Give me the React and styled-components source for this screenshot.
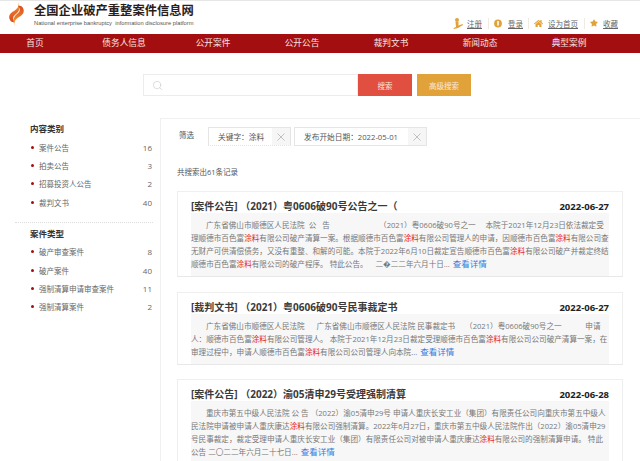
import React from "react";
import styled, { createGlobalStyle } from "styled-components";
import { FaHome, FaStar } from "react-icons/fa";
import { Search } from "lucide-react";

const GlobalStyle = createGlobalStyle`
  html, body {
    margin: 0;
    padding: 0;
    background: #fff;
    overflow: hidden;
  }
  body {
    font-family: "Open Sans", "Noto Sans CJK SC", sans-serif;
    color: #555;
  }
`;

const Page = styled.div`
  width: 640px;
  height: 461px;
  overflow: hidden;
  border-top: 1px solid #e6e6e6;
  box-sizing: border-box;
`;

const Header = styled.header`
  display: flex;
  justify-content: space-between;
  height: 33px;
  padding: 0 16px 0 8px;
`;

const Brand = styled.div`
  display: flex;
  gap: 9px;
`;

const BrandText = styled.div`
  display: flex;
  flex-direction: column;
  padding-top: 2px;
`;

const BrandTitle = styled.div`
  font-size: 12.3px;
  line-height: 16px;
  font-weight: 700;
  color: #2c1d1d;
  white-space: nowrap;
`;

const BrandSub = styled.div`
  font-family: "Liberation Sans", sans-serif;
  font-size: 5.75px;
  line-height: 8px;
  color: #555;
  white-space: pre;
`;

const TopLinks = styled.div`
  display: flex;
  align-items: center;
  height: 12px;
  margin-top: 16px;
`;

const TopLink = styled.a`
  display: flex;
  align-items: center;
  gap: ${(p) => p.$gap}px;
  padding: 0 ${(p) => p.$right}px 0 5px;
  height: 11px;
  font-size: 7.5px;
  color: #666;
  text-decoration: underline;
  border-left: ${(p) => (p.$first ? "none" : "1px solid #f0ebe0")};
  svg {
    color: #e2a23a;
    flex: none;
  }
`;

const Nav = styled.nav`
  display: grid;
  grid-template-columns: 79.5px repeat(6, 89px);
  height: 19px;
  background: #a30f10;
`;

const NavItem = styled.a`
  font-size: 8.7px;
  line-height: 19px;
  text-align: center;
  color: #f5e3e3;
  white-space: nowrap;
  margin-left: ${(p) => (p.$first ? "-9.5px" : "0")};
`;

const SearchRow = styled.div`
  display: flex;
  height: 22px;
  margin: 21px 0 0 143px;
`;

const SearchBox = styled.div`
  display: flex;
  align-items: center;
  width: 215px;
  box-sizing: border-box;
  padding-left: 8px;
  border: 1px solid #ececec;
  color: #c8c8c8;
`;

const SearchButton = styled.button`
  width: 54px;
  height: 22px;
  margin-right: 5px;
  padding: 0;
  border: none;
  font-family: inherit;
  font-size: 7.5px;
  color: #fbe9d8;
  background: ${(p) => p.$bg};
`;

const Content = styled.div`
  display: flex;
  gap: 7px;
  margin-top: 22px;
  padding-left: 15px;
`;

const Sidebar = styled.aside`
  width: 138px;
  flex: none;
`;

const SideGroup = styled.section`
  padding-top: 5px;
  padding-bottom: 10px;
  & + & {
    border-top: 1px dotted #ddd;
  }
`;

const SideTitle = styled.h3`
  margin: 0 0 3px 15px;
  font-size: 8.5px;
  line-height: 12px;
  font-weight: 700;
  color: #333;
`;

const SideRow = styled.div`
  display: flex;
  align-items: center;
  height: 18.4px;
  padding-left: 16px;
  font-size: 7.5px;
  color: #666;
  &::before {
    content: "";
    width: 3px;
    height: 3px;
    margin-right: 5px;
    border-radius: 50%;
    background: #a30f10;
  }
`;

const SideLabel = styled.span`
  flex: 1;
`;

const SideCount = styled.span`
  color: #666;
  font-size: 8px;
  margin-right: 1px;
`;

const Main = styled.main`
  flex: 1;
  border-top: 1px solid #f0f0f0;
  border-left: 1px solid #f0f0f0;
  padding: 8px 17px 0 16px;
`;

const FilterRow = styled.div`
  display: flex;
  align-items: flex-start;
`;

const FilterLabel = styled.span`
  width: 31px;
  padding-left: 2px;
  box-sizing: border-box;
  font-size: 7.5px;
  line-height: 16px;
`;

const Tag = styled.div`
  display: flex;
  width: ${(p) => p.$width}px;
  height: 19px;
  margin-right: 3px;
  box-sizing: border-box;
  border: 1px solid #e5e5e5;
  border-bottom-style: ${(p) => (p.$dotted ? "dotted" : "solid")};
`;

const TagText = styled.span`
  flex: 1;
  padding-left: 9px;
  font-size: 7.7px;
  line-height: 18px;
  white-space: nowrap;
  color: #555;
`;

const TagClose = styled.span`
  display: flex;
  align-items: center;
  justify-content: center;
  width: 18px;
  background: #f6f6f6;
  svg {
    display: block;
  }
`;

const Total = styled.div`
  margin: 19px 0 0;
  font-size: 7.5px;
  line-height: 14px;
  color: #555;
`;

const Card = styled.article`
  margin-top: ${(p) => p.$top}px;
  padding: 7px 13px 0;
  background: #fff;
  border: 1px solid #efefef;
  border-bottom: 1px solid #e8e8e8;
`;

const CardHead = styled.div`
  display: flex;
  justify-content: space-between;
  align-items: center;
  height: 14px;
`;

const CardTitle = styled.h2`
  margin: 0;
  font-size: 10px;
  line-height: 14px;
  font-weight: 700;
  color: #3a3a3a;
  white-space: nowrap;
`;

const CardDate = styled.span`
  font-size: 9.5px;
  font-weight: 700;
  color: #222;
`;

const CardBody = styled.div`
  padding: 5.5px 0 5px;
  background: #f7f7f7;
  font-size: 7.6px;
  line-height: 13.2px;
  color: #777;
`;

const BodyLine = styled.div`
  height: 13.2px;
  white-space: pre;
  text-indent: ${(p) => (p.$indent ? "15px" : "0")};
`;

const Hit = styled.span`
  color: #e2231a;
`;

const More = styled.a`
  margin-left: 3px;
  font-size: 8.5px;
  line-height: 1;
  color: #2f7ee0;
`;

// text with the keyword picked out
const withHits = (text) =>
  text.split("涂料").map((part, i) => (
    <React.Fragment key={i}>
      {i > 0 && <Hit>涂料</Hit>}
      {part}
    </React.Fragment>
  ));

const sideGroups = [
  {
    title: "内容类别",
    rows: [
      ["案件公告", 16],
      ["拍卖公告", 3],
      ["招募投资人公告", 2],
      ["裁判文书", 40],
    ],
  },
  {
    title: "案件类型",
    rows: [
      ["破产审查案件", 8],
      ["破产案件", 40],
      ["强制清算申请审查案件", 11],
      ["强制清算案件", 2],
    ],
  },
];

const cards = [
  {
    top: 12,
    title: "[案件公告] （2021）粤0606破90号公告之一（",
    date: "2022-06-27",
    lines: [
      "广东省佛山市顺德区人民法院  公   告                         （2021）粤0606破90号之一     本院于2021年12月23日依法裁定受",
      "理顺德市百色富涂料有限公司破产清算一案。根据顺德市百色富涂料有限公司管理人的申请，因顺德市百色富涂料有限公司查",
      "无财产可供清偿债务，又没有重整、和解的可能。本院于2022年6月10日裁定宣告顺德市百色富涂料有限公司破产并裁定终结",
      "顺德市百色富涂料有限公司的破产程序。 特此公告。    二�二二年六月十日...",
    ],
  },
  {
    top: 15,
    title: "[裁判文书] （2021）粤0606破90号民事裁定书",
    date: "2022-06-27",
    lines: [
      "广东省佛山市顺德区人民法院      广东省佛山市顺德区人民法院 民事裁定书     （2021）粤0606破90号之一            申请",
      "人：顺德市百色富涂料有限公司管理人。 本院于2021年12月23日裁定受理顺德市百色富涂料有限公司公司破产清算一案，在",
      "审理过程中，申请人顺德市百色富涂料有限公司公司管理人向本院...",
    ],
  },
  {
    top: 14,
    title: "[案件公告] （2022）渝05清申29号受理强制清算",
    date: "2022-06-28",
    lines: [
      "重庆市第五中级人民法院 公 告 （2022）渝05清申29号 申请人重庆长安工业（集团）有限责任公司向重庆市第五中级人",
      "民法院申请被申请人重庆康达涂料有限公司强制清算。2022年6月27日，重庆市第五中级人民法院作出（2022）渝05清申29",
      "号民事裁定，裁定受理申请人重庆长安工业（集团）有限责任公司对被申请人重庆康达涂料有限公司的强制清算申请。 特此",
      "公告 二〇二二年六月二十七日...",
    ],
  },
];

const navItems = ["首页", "债务人信息", "公开案件", "公开公告", "裁判文书", "新闻动态", "典型案例"];

const Logo = () => (
  <svg width="17" height="26" viewBox="0 0 17 26">
    <defs>
      <linearGradient id="flameTop" x1="0" y1="0" x2="0" y2="1">
        <stop offset="0" stopColor="#f0b43c" />
        <stop offset="0.45" stopColor="#e8702a" />
        <stop offset="1" stopColor="#dc4a22" />
      </linearGradient>
      <linearGradient id="flameBottom" x1="0" y1="1" x2="0" y2="0">
        <stop offset="0" stopColor="#f2c044" />
        <stop offset="0.4" stopColor="#e9802c" />
        <stop offset="1" stopColor="#dc4a22" />
      </linearGradient>
    </defs>
    <path d="M10 1C12 5 9 8 6 10 2 12 0 15 2 19c1 2 3 2.500 5 2C4 18 5 15 8 13c3-2 5-7 2-12z" fill="url(#flameTop)" />
    <path d="M7 25C5 21 8 18 11 16c4-2 6-5 4-9-1-2-3-2.500-5-2 3 3 2 6-1 8-3 2-5 7-2 12z" fill="url(#flameBottom)" />
  </svg>
);

const UserIcon = () => (
  <svg width="10" height="11" viewBox="0 0 10 11" fill="#e2a23a">
    <circle cx="4" cy="2" r="2" />
    <path d="M2.500 4h3v3.500L9.500 6l.5 1-5 3-4 1-.5-1 2.500-1z" />
  </svg>
);

const KeyIcon = () => (
  <svg width="8" height="9" viewBox="0 0 8 9">
    <circle cx="4" cy="4.500" r="3.900" fill="#e2a23a" />
    <rect x="3.200" y="2" width="1.600" height="4.500" fill="#fff" />
  </svg>
);

const CloseIcon = () => (
  <svg width="8" height="8" viewBox="0 0 8 8" stroke="#aaa" strokeWidth="0.7">
    <path d="M.5.500l7 7M7.500.500l-7 7" />
  </svg>
);

export default function App() {
  return (
    <Page>
      <GlobalStyle />
      <Header>
        <Brand>
          <Logo />
          <BrandText>
            <BrandTitle>全国企业破产重整案件信息网</BrandTitle>
            <BrandSub>National enterprise bankruptcy  information disclosure platform</BrandSub>
          </BrandText>
        </Brand>
        <TopLinks>
          <TopLink $first $gap={4} $right={6}><UserIcon />注册</TopLink>
          <TopLink $gap={6} $right={5}><KeyIcon />登录</TopLink>
          <TopLink $gap={5} $right={6}><FaHome size={9} />设为首页</TopLink>
          <TopLink $gap={5} $right={6}><FaStar size={8} />收藏</TopLink>
        </TopLinks>
      </Header>
      <Nav>
        {navItems.map((item, i) => (
          <NavItem key={item} $first={i === 0}>{item}</NavItem>
        ))}
      </Nav>
      <SearchRow>
        <SearchBox><Search size={11} strokeWidth={1.3} /></SearchBox>
        <SearchButton $bg="#e04f3f">搜索</SearchButton>
        <SearchButton $bg="#e2a23a">高级搜索</SearchButton>
      </SearchRow>
      <Content>
        <Sidebar>
          {sideGroups.map((group) => (
            <SideGroup key={group.title}>
              <SideTitle>{group.title}</SideTitle>
              {group.rows.map(([label, count]) => (
                <SideRow key={label}>
                  <SideLabel>{label}</SideLabel>
                  <SideCount>{count}</SideCount>
                </SideRow>
              ))}
            </SideGroup>
          ))}
        </Sidebar>
        <Main>
          <FilterRow>
            <FilterLabel>筛选</FilterLabel>
            <Tag $width={83} $dotted>
              <TagText>关键字：涂料</TagText>
              <TagClose><CloseIcon /></TagClose>
            </Tag>
            <Tag $width={133}>
              <TagText>发布开始日期：2022-05-01</TagText>
              <TagClose><CloseIcon /></TagClose>
            </Tag>
          </FilterRow>
          <Total>共搜索出61条记录</Total>
          {cards.map((card) => (
            <Card key={card.title} $top={card.top}>
              <CardHead>
                <CardTitle>{card.title}</CardTitle>
                <CardDate>{card.date}</CardDate>
              </CardHead>
              <CardBody>
                {card.lines.map((line, i) => {
                  const last = i === card.lines.length - 1;
                  return (
                    <BodyLine key={i} $indent={i === 0}>
                      {withHits(line)}
                      {last && <More>查看详情</More>}
                    </BodyLine>
                  );
                })}
              </CardBody>
            </Card>
          ))}
        </Main>
      </Content>
    </Page>
  );
}
